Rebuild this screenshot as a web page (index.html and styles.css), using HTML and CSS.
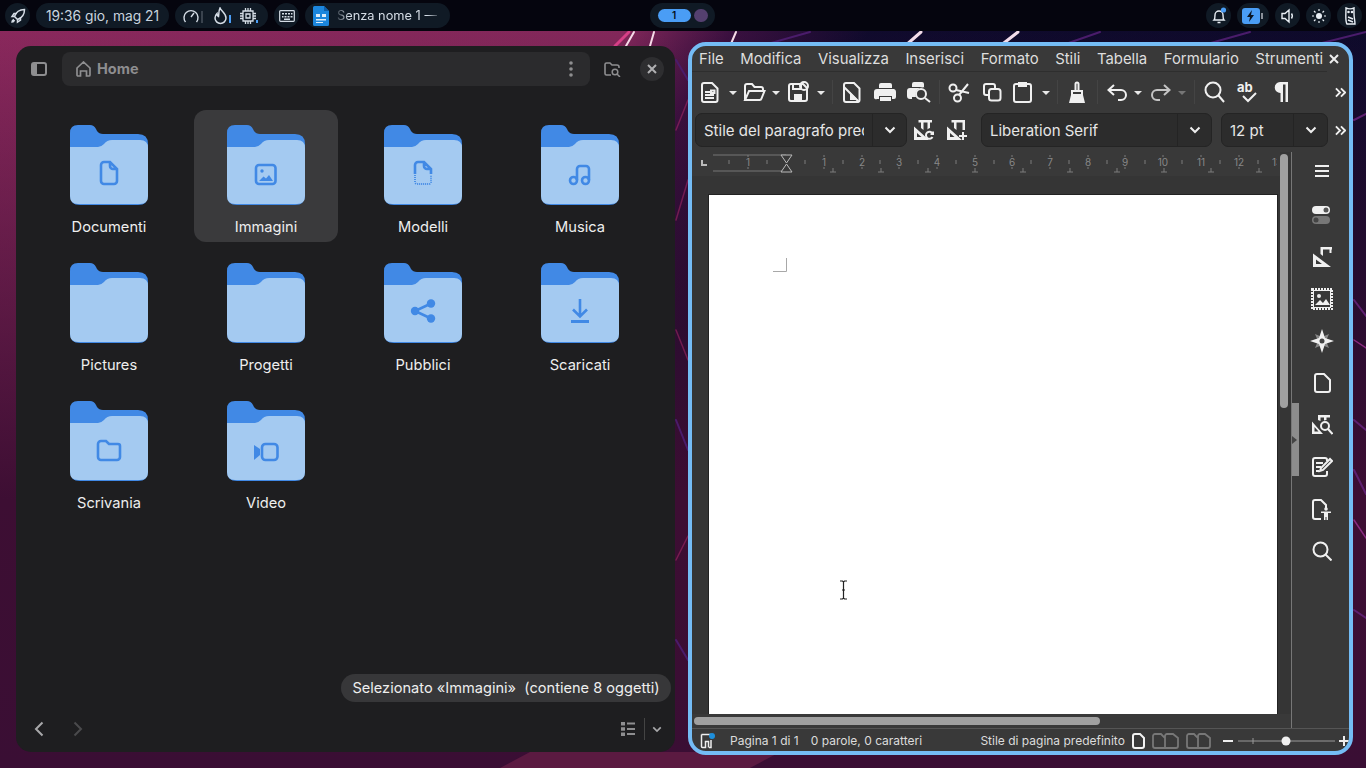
FILE: index.html
```html
<!DOCTYPE html>
<html lang="it">
<head>
  <meta charset="UTF-8">
  <meta name="viewport" content="width=device-width, initial-scale=1.0">
  <title>Desktop</title>
  <link rel="stylesheet" href="styles.css">
</head>
<body>
  <svg width="0" height="0" class="defs">
    <symbol id="folder" viewBox="0 0 78 80">
      <path fill="#4189e5" d="M8 0H20q4 0 6 4l1 2q2 3 6 3H68q10 0 10 10V70q0 10-10 10H10Q0 80 0 70V8Q0 0 8 0Z"/>
      <path fill="#a4caf1" d="M0 22H28q3 0 6-3 3-4 8-4H70q8 0 8 8V71q0 8-8 8H8q-8 0-8-8Z"/>
    </symbol>
    <symbol id="tri" viewBox="0 0 8 24"><path fill="#e8e8e8" d="M0 11h8l-4 4z"/></symbol>
    <symbol id="chev" viewBox="0 0 12 8"><path fill="none" stroke="#eee" stroke-width="2" d="M1.500 1.500 6 6l4.500-4.500"/></symbol>
    <symbol id="more" viewBox="0 0 12 12"><path fill="none" stroke="#eee" stroke-width="2" d="M1 1.500 5.500 6 1 10.500M6.500 1.500 11 6l-4.500 4.500"/></symbol>
  </svg>

  <!-- wallpaper -->
  <svg class="wallpaper" width="1366" height="768" viewBox="0 0 1366 768">
    <defs>
      <linearGradient id="wallBase" x1="0" y1="0" x2="1" y2="0.35">
        <stop offset="0" stop-color="#8f2a5f"/>
        <stop offset="0.42" stop-color="#86295c"/>
        <stop offset="0.49" stop-color="#3a1040"/>
        <stop offset="0.58" stop-color="#0d0a2c"/>
        <stop offset="1" stop-color="#0a0a2a"/>
      </linearGradient>
      <linearGradient id="wallLow" x1="0" y1="0" x2="0" y2="1">
        <stop offset="0" stop-color="#3d0e33" stop-opacity="0"/>
        <stop offset="0.65" stop-color="#3d0e33"/>
        <stop offset="1" stop-color="#3a0e34"/>
      </linearGradient>
    </defs>
    <rect width="1366" height="768" fill="url(#wallBase)"/>
    <rect width="1366" height="768" fill="url(#wallLow)"/>
    <path fill="#5b1a41" d="M530 752h250l-30 16H500z"/>
    <g fill="none" stroke-linecap="round">
      <path stroke="#f6dbe8" stroke-width="2" d="M634 32l-8 14M654 32l-4 14M730 46l6-14"/>
      <path stroke="#d63f86" stroke-width="3" d="M615 46l14-14"/>
      <path stroke="#f3dcea" stroke-width="3" d="M905 46l16-14M1000 46l18-14"/>
      <path stroke="#4a1c6b" stroke-width="2" d="M760 46l50-14M1060 46l40-14M1200 46l50-14M1310 46l56-14"/>
      <path stroke="#5e1f70" stroke-width="2" d="M1354 120l12-6M1354 300l12 16M1354 420l12 10M1354 470l12 24M1354 610l12 8"/>
      <path stroke="#8a2a80" stroke-width="1.500" d="M1354 340l12 8M1354 520l12 18"/>
      <path stroke="#b42a6c" stroke-width="1.500" opacity="0.5" d="M676 130l12-30M676 220l12-40M676 330l12 30M676 560l12-24"/>
      <path stroke="#4a1c6b" stroke-width="2" d="M676 420l12 30M676 640l12 20M676 60l12 20"/>
    </g>
  </svg>

  <div class="topbar">
    <div class="pill round">
      <svg width="16" height="16" viewBox="0 0 16 16"><path fill="none" stroke="#d5dde6" stroke-width="1.500" d="M6 10 4.500 8.500C6 4 9.500 1.500 14.500 1.500 14.500 6.500 12 10 7.500 11.500ZM4.500 8.500H2l2-3h3M7.500 11.500V14l3-2V9M4 11.500c-1.500.5-2 2-2 2.500.5 0 2-.5 2.500-2"/></svg>
    </div>
    <div class="pill clock">19:36 gio, mag 21</div>
    <div class="pill stats">
      <svg width="16" height="16" viewBox="0 0 16 16"><path fill="none" stroke="#d5dde6" stroke-width="1.400" d="M2.500 14a7 7 0 1 1 11 0M8 9l3-4"/></svg>
      <span class="meter"></span>
      <svg class="fire" width="16" height="18" viewBox="0 0 16 18"><path fill="none" stroke="#d5dde6" stroke-width="1.500" d="M7 1c1 3 6 5 6 10a5.500 5.500 0 0 1-11 0c0-2 1-3.500 2-4.500 0 1.500.5 2.500 1.500 3C6 7 5.500 4 7 1Z"/></svg>
      <span class="meter blue"></span>
      <svg class="chip" width="16" height="16" viewBox="0 0 16 16"><path fill="none" stroke="#d5dde6" stroke-width="1.300" d="M3 3h10v10H3zM6 6h4v4H6zM5.500 0v3M8 0v3M10.500 0v3M5.500 13v3M8 13v3M10.500 13v3M0 5.500h3M0 8h3M0 10.500h3M13 5.500h3M13 8h3M13 10.500h3"/></svg>
      <span class="meter blue low"></span>
    </div>
    <div class="pill round">
      <svg width="16" height="12" viewBox="0 0 16 12"><path fill="none" stroke="#d5dde6" stroke-width="1.200" d="M1.500.7h13a.8.8 0 0 1 .8.8v9a.8.8 0 0 1-.8.8h-13a.8.8 0 0 1-.8-.8v-9a.8.8 0 0 1 .8-.8z"/><path fill="#d5dde6" d="M3 3h2v1.500H3zM6 3h2v1.500H6zM9 3h2v1.500H9zM12 3h1.500v1.500H12zM3 6h1.500v1.500H3zM5.500 6h2v1.500h-2zM8.500 6h2v1.500h-2zM11.500 6h2v1.500h-2zM5 8.500h6V10H5z"/></svg>
    </div>
    <div class="pill task">
      <svg width="16" height="20" viewBox="0 0 16 20">
        <path fill="#1c86dd" d="M1.500 0H11l5 5v13.500a1.500 1.500 0 0 1-1.500 1.500h-13A1.500 1.500 0 0 1 0 18.500v-17A1.500 1.500 0 0 1 1.500 0Z"/>
        <path fill="#0f5ea8" d="M11 0l5 5h-5z"/>
        <path fill="#dcecf9" d="M3 8h4v3H3zM9 8h4v3H9zM3 13h10v1.500H3zM3 16h7v1H3z"/>
      </svg>
      <span class="task-title">Senza nome 1 —</span>
    </div>
    <div class="pill workspaces">
      <span class="ws-active">1</span>
      <span class="ws-dot"></span>
    </div>
    <div class="spacer"></div>
    <div class="pill tray">
      <svg width="16" height="18" viewBox="0 0 16 18"><path fill="none" stroke="#e8eef4" stroke-width="1.400" d="M3 13c1-1 1-3 1-5a4 4 0 0 1 8 0c0 2 0 4 1 5zM6.500 15.500h3"/><circle cx="12.500" cy="3" r="2.600" fill="#4a9df5"/></svg>
    </div>
    <div class="pill tray wide">
      <svg width="22" height="16" viewBox="0 0 22 16"><rect width="18" height="16" rx="3" fill="#4a9df5"/><path fill="#0b1522" d="M10 2 5 9h3l-1 5 5-7H9z"/><path fill="#8b9099" d="M19 5h2v6h-2z"/></svg>
    </div>
    <div class="pill tray">
      <svg width="14" height="16" viewBox="0 0 14 16"><path fill="none" stroke="#e8eef4" stroke-width="1.400" d="M1 5.500h3L8 2v12l-4-3.500H1zM10.500 5.500c1 1.500 1 3.500 0 5"/></svg>
    </div>
    <div class="pill tray">
      <svg width="14" height="14" viewBox="0 0 14 14"><circle cx="7" cy="7" r="3" fill="#e8eef4"/><path stroke="#e8eef4" stroke-width="1.200" d="M7 0v2M7 12v2M0 7h2M12 7h2M2 2l1.500 1.500M10.500 10.500 12 12M2 12l1.500-1.500M10.500 3.500 12 2"/></svg>
    </div>
    <div class="pill tray">
      <svg width="12" height="18" viewBox="0 0 12 18"><path fill="none" stroke="#e8eef4" stroke-width="1.400" d="M2 1c2 1 6 1 8 0v6c0 3 1 7 1 10H3C1 14 2 8 2 1Z"/><circle cx="4.500" cy="5" r="1.300" fill="#e8eef4"/><circle cx="8" cy="5" r="1.300" fill="#e8eef4"/><path stroke="#e8eef4" stroke-width="1.400" d="M4 10l5 2M4 13l5 2"/></svg>
    </div>
  </div>

  <!-- file manager -->
  <div class="window files">
    <div class="files-head">
      <button class="flat-btn">
        <svg width="16" height="14" viewBox="0 0 16 14"><path fill="none" stroke="#8e8e90" stroke-width="2" d="M3 1h10a2 2 0 0 1 2 2v8a2 2 0 0 1-2 2H3a2 2 0 0 1-2-2V3a2 2 0 0 1 2-2z"/><path fill="#8e8e90" d="M1 2h5v10H1z"/></svg>
      </button>
      <div class="pathbar">
        <svg width="15" height="16" viewBox="0 0 15 16"><path fill="none" stroke="#8e8e90" stroke-width="1.700" d="M1 7l6.500-6L14 7v7a1 1 0 0 1-1 1h-2.500v-5h-6v5H2a1 1 0 0 1-1-1z"/></svg>
        <span class="path-name">Home</span>
        <svg class="kebab" width="4" height="16" viewBox="0 0 4 16"><circle cx="2" cy="2" r="1.800" fill="#8e8e90"/><circle cx="2" cy="8" r="1.800" fill="#8e8e90"/><circle cx="2" cy="14" r="1.800" fill="#8e8e90"/></svg>
      </div>
      <button class="flat-btn search-btn">
        <svg width="17" height="15" viewBox="0 0 17 15"><path fill="none" stroke="#8e8e90" stroke-width="1.600" d="M7 13H2.500A1.500 1.500 0 0 1 1 11.500v-9A1.500 1.500 0 0 1 2.500 1H6l2 2h5a2 2 0 0 1 2 2v1"/><circle cx="11" cy="10" r="2.800" fill="none" stroke="#8e8e90" stroke-width="1.500"/><path stroke="#8e8e90" stroke-width="1.500" d="M13 12l3 3"/></svg>
      </button>
      <button class="close-btn">
        <svg width="10" height="10" viewBox="0 0 10 10"><path stroke="#b0b0b2" stroke-width="2" d="M1 1l8 8M9 1l-8 8"/></svg>
      </button>
    </div>

    <div class="grid">
      <div class="item">
        <svg width="78" height="80" viewBox="0 0 78 80"><use href="#folder"/><path class="gl" d="M34 37h6l7 7v12a3 3 0 0 1-3 3H34a3 3 0 0 1-3-3V40a3 3 0 0 1 3-3zM40 37v4a3 3 0 0 0 3 3h4"/></svg>
        <span>Documenti</span>
      </div>
      <div class="item selected">
        <svg width="78" height="80" viewBox="0 0 78 80"><use href="#folder"/><rect class="gl" x="29" y="40" width="19.500" height="19" rx="3"/><circle cx="35" cy="46" r="1.700" fill="#4189e5"/><path fill="#4189e5" d="M32 56l4.500-4.500 2.500 2 3-3.500 4 6z"/></svg>
        <span>Immagini</span>
      </div>
      <div class="item">
        <svg width="78" height="80" viewBox="0 0 78 80"><use href="#folder"/><path class="gl" d="M31 49V40a3 3 0 0 1 3-3h6l7 7v5M40 37v4a3 3 0 0 0 3 3h4"/><path class="gl dots" d="M31 50v7a2 2 0 0 0 2 2h12a2 2 0 0 0 2-2v-7"/></svg>
        <span>Modelli</span>
      </div>
      <div class="item">
        <svg width="78" height="80" viewBox="0 0 78 80"><use href="#folder"/><circle class="gl" cx="32.500" cy="55.500" r="3.500"/><circle class="gl" cx="44.500" cy="55.500" r="3.500"/><path class="gl" d="M36 55V44a3 3 0 0 1 3-3h6a3 3 0 0 1 3 3v11"/></svg>
        <span>Musica</span>
      </div>
      <div class="item">
        <svg width="78" height="80" viewBox="0 0 78 80"><use href="#folder"/></svg>
        <span>Pictures</span>
      </div>
      <div class="item">
        <svg width="78" height="80" viewBox="0 0 78 80"><use href="#folder"/></svg>
        <span>Progetti</span>
      </div>
      <div class="item">
        <svg width="78" height="80" viewBox="0 0 78 80"><use href="#folder"/><circle cx="31" cy="48" r="4.200" fill="#4189e5"/><circle cx="47" cy="40.500" r="4.200" fill="#4189e5"/><circle cx="47" cy="55.500" r="4.200" fill="#4189e5"/><path class="gl" d="M47 40.500 31 48l16 7.500"/></svg>
        <span>Pubblici</span>
      </div>
      <div class="item">
        <svg width="78" height="80" viewBox="0 0 78 80"><use href="#folder"/><path class="gl" d="M39 36v17M32 46.500l7 7 7-7"/><path fill="#4189e5" d="M30 57h18v3H30z"/></svg>
        <span>Scaricati</span>
      </div>
      <div class="item">
        <svg width="78" height="80" viewBox="0 0 78 80"><use href="#folder"/><path class="gl" d="M28 43a3 3 0 0 1 3-3h5l3 3h9a2 2 0 0 1 2 2v11a3 3 0 0 1-3 3H31a3 3 0 0 1-3-3z"/></svg>
        <span>Scrivania</span>
      </div>
      <div class="item">
        <svg width="78" height="80" viewBox="0 0 78 80"><use href="#folder"/><rect class="gl" x="35" y="43" width="15.500" height="16" rx="3.500"/><path fill="#4189e5" d="M27 44l6 4v6l-6 5z"/></svg>
        <span>Video</span>
      </div>
    </div>

    <div class="toast">Selezionato «Immagini»  (contiene 8 oggetti)</div>

    <div class="files-foot">
      <svg width="10" height="16" viewBox="0 0 10 16"><path fill="none" stroke="#a8a8aa" stroke-width="2" d="M8.500 1.500 2 8l6.500 6.500"/></svg>
      <svg class="forward" width="10" height="16" viewBox="0 0 10 16"><path fill="none" stroke="#4a4a4c" stroke-width="2" d="M1.500 1.500 8 8l-6.500 6.500"/></svg>
      <div class="spacer"></div>
      <svg width="14" height="14" viewBox="0 0 14 14"><path fill="#8e8e90" d="M0 0h4v3.500H0zM0 5.200h4v3.500H0zM0 10.500h4V14H0zM6 .5h8v2H6zM6 6h8v2H6zM6 11h8v2H6z"/></svg>
      <span class="foot-sep"></span>
      <svg width="10" height="7" viewBox="0 0 12 8"><path fill="none" stroke="#a8a8aa" stroke-width="2" d="M1.500 1.500 6 6l4.500-4.500"/></svg>
    </div>
  </div>

  <!-- writer -->
  <div class="window writer">
    <div class="menubar">
      <span>File</span><span>Modifica</span><span>Visualizza</span><span>Inserisci</span><span>Formato</span><span>Stili</span><span>Tabella</span><span>Formulario</span><span>Strumenti</span>
      <svg class="menu-close" width="10" height="10" viewBox="0 0 10 10"><path stroke="#eee" stroke-width="2" d="M1 1l8 8M9 1l-8 8"/></svg>
    </div>

    <div class="toolbar">
      <svg class="ic" width="28" height="24" viewBox="0 0 28 24"><path d="M3 3h8l5.500 5.500V20a2 2 0 0 1-2 2H3a2 2 0 0 1-2-2V5a2 2 0 0 1 2-2z"/><path stroke-width="1.500" d="M4 12h5M4 15h9M4 18h9M10 10.500h3.500v2.500H10z"/></svg>
      <svg width="14" height="24" viewBox="0 0 14 24"><use href="#tri" width="8" height="24"/></svg>
      <svg class="ic" width="29" height="24" viewBox="0 0 29 24"><path d="M2 20V6a2 2 0 0 1 2-2h5l2.500 3H18a2 2 0 0 1 2 2v2M2 20l4-9h15.500l-3 7.500a2 2 0 0 1-2 1.500z"/></svg>
      <svg width="16" height="24" viewBox="0 0 16 24"><use href="#tri" width="8" height="24"/></svg>
      <svg class="ic" width="29" height="24" viewBox="0 0 29 24"><path d="M3 4h12l4 4v11a2 2 0 0 1-2 2H3a2 2 0 0 1-2-2V6a2 2 0 0 1 2-2z"/><path d="M5 4v5h8V4"/><path class="solid" d="M6 14h8v7H6z"/><circle cx="16" cy="6" r="4" fill="#1d8fdc" stroke="none"/></svg>
      <svg width="15" height="24" viewBox="0 0 15 24"><use href="#tri" width="8" height="24"/></svg>
      <svg class="sep" width="11" height="24" viewBox="0 0 11 24"><path d="M.500 0v24"/></svg>
      <svg class="ic" width="31" height="24" viewBox="0 0 31 24"><path d="M3 3h8l5.500 5.500V20a2 2 0 0 1-2 2H3a2 2 0 0 1-2-2V5a2 2 0 0 1 2-2z"/><path d="M1 7l15 15"/><path class="solid" d="M7 12v8h8z"/></svg>
      <svg class="ic" width="33" height="24" viewBox="0 0 33 24"><path class="solid" d="M5 5a2 2 0 0 1 2-2h9a2 2 0 0 1 2 2v3H5zM3 9h17a3 3 0 0 1 2 3v5a2 2 0 0 1-2 2h-2v-3H5v3H3a2 2 0 0 1-3-2v-5a3 3 0 0 1 3-3zM6 17h11v4H6z"/></svg>
      <svg class="ic" width="32" height="24" viewBox="0 0 32 24"><path class="solid" d="M5 4a2 2 0 0 1 2-2h8a2 2 0 0 1 2 2v3H5zM3 8h15a7 7 0 0 0-9 9H5v2H3a3 3 0 0 1-3-3v-5a3 3 0 0 1 3-3z"/><circle cx="14" cy="14" r="5"/><path d="M18 18l5 4"/></svg>
      <svg class="sep" width="9" height="24" viewBox="0 0 9 24"><path d="M.500 0v24"/></svg>
      <svg class="ic" width="35" height="24" viewBox="0 0 35 24"><circle cx="5" cy="8" r="3.500"/><circle cx="9.500" cy="18" r="3.500"/><path d="M8 10l13 3M11 15l9-11"/></svg>
      <svg class="ic" width="30" height="24" viewBox="0 0 30 24"><path d="M5 15H3a2 2 0 0 1-2-2V6a2 2 0 0 1 2-2h7a2 2 0 0 1 2 2v2"/><rect x="6" y="9" width="11.500" height="11.500" rx="2.500"/></svg>
      <svg class="ic" width="29" height="24" viewBox="0 0 29 24"><path d="M5 4H3a2 2 0 0 0-2 2v14a2 2 0 0 0 2 2h13a2 2 0 0 0 2-2V6a2 2 0 0 0-2-2h-2"/><path class="solid" d="M5 2h9v5H5z"/></svg>
      <svg width="15" height="24" viewBox="0 0 15 24"><use href="#tri" width="8" height="24"/></svg>
      <svg class="sep" width="12" height="24" viewBox="0 0 12 24"><path d="M.500 0v24"/></svg>
      <svg class="ic" width="28" height="24" viewBox="0 0 28 24"><path d="M6.500 10V4a1.500 1.500 0 0 1 3 0v6M3 11h10v4H3z"/><path class="solid" d="M2 15h12l2 8H0z"/></svg>
      <svg class="sep" width="10" height="24" viewBox="0 0 10 24"><path d="M.500 0v24"/></svg>
      <svg class="ic" width="27" height="24" viewBox="0 0 27 24"><path d="M7 5 1.500 10 7 15M2 10h12a5 5 0 0 1 0 10h-3"/></svg>
      <svg width="17" height="24" viewBox="0 0 17 24"><use href="#tri" width="8" height="24"/></svg>
      <svg class="ic dim" width="27" height="24" viewBox="0 0 27 24"><path d="M13 5l5.500 5L13 15M18 10H6a5 5 0 0 0 0 10h3"/></svg>
      <svg class="faded" width="16" height="24" viewBox="0 0 16 24"><use href="#tri" width="8" height="24"/></svg>
      <svg class="sep" width="10" height="24" viewBox="0 0 10 24"><path d="M.500 0v24"/></svg>
      <svg class="ic" width="33" height="24" viewBox="0 0 33 24"><circle cx="9" cy="10" r="7.500"/><path d="M14.500 15.500 20 22"/></svg>
      <svg class="ic" width="37" height="24" viewBox="0 0 37 24"><text class="ab" x="0" y="12">ab</text><path d="M6 16l5 5 8-8"/></svg>
      <svg class="ic" width="61" height="24" viewBox="0 0 61 24"><path class="solid" d="M6 2h8v20h-2.500V4.500H9V22H6.500V13A5.500 5.500 0 0 1 6 2z"/></svg>
      <svg width="11" height="11" viewBox="0 0 12 12"><use href="#more"/></svg>
    </div>

    <div class="toolbar second">
      <div class="combo style-combo"><span class="combo-text">Stile del paragrafo predefinito</span><span class="combo-btn"><svg width="12" height="8"><use href="#chev"/></svg></span></div>
      <svg class="ic" width="20" height="20" viewBox="0 0 20 20"><path class="solid" fill-rule="evenodd" d="M0 6.500 15 20H0ZM3 13v4h4.500Z"/><path class="solid" d="M4.500 0H18v2.500h-2V8a6 6 0 0 0-2.500 1.500V2.500h-4v7.500L7 8V2.500H4.500z"/><path stroke-width="1.700" d="M18.500 13.500a3.500 3.500 0 1 0 0 3.500M19 11.500v2.500h-2.500"/></svg>
      <svg class="ic" width="20" height="20" viewBox="0 0 20 20"><path class="solid" fill-rule="evenodd" d="M0 6.500 15 20H0ZM3 13v4h4.500Z"/><path class="solid" d="M4.500 0H18v10h-2.500V2.500h-6v7.500L7 8V2.500H4.500z"/><path d="M16 12v8M12 16h8"/></svg>
      <div class="combo font-combo"><span class="combo-text">Liberation Serif</span><span class="combo-btn"><svg width="12" height="8"><use href="#chev"/></svg></span></div>
      <div class="combo size-combo"><span class="combo-text">12 pt</span><span class="combo-btn"><svg width="12" height="8"><use href="#chev"/></svg></span></div>
      <svg class="more-second" width="11" height="11" viewBox="0 0 12 12"><use href="#more"/></svg>
    </div>

    <div class="work">
      <div class="editor">
        <svg class="ruler" width="585" height="24" viewBox="692 152 585 24">
          <path class="ruler-box" d="M713 155h73M713 171h73"/>
          <path class="ruler-mark" d="M781 155h11l-5.500 8zM781 172h11l-5.500-8z"/>
          <path class="ruler-corner" d="M701 160v6h6v-2h-4v-4z"/>
          <path class="ruler-tick" d="M729 160v4M767 160v4M805 160v4M843 160v4M880 160v4M918 160v4M956 160v4M994 160v4M1031 160v4M1069 160v4M1107 160v4M1145 160v4M1182 160v4M1220 160v4M1258 160v4M748 155v2M748 167v2M824 155v2M824 167v2M862 155v2M862 167v2M899 155v2M899 167v2M937 155v2M937 167v2M975 155v2M1012 155v2M1012 167v2M1050 155v2M1050 167v2M1088 155v2M1088 167v2M1125 155v2M1125 167v2M1163 155v2M1201 155v2M1239 155v2M1239 167v2"/>
          <path class="ruler-tab" d="M833 168v4M830 172h6M881 168v4M878 172h6M928 168v4M925 172h6M975 168v4M972 172h6M1023 168v4M1020 172h6M1070 168v4M1067 172h6M1117 168v4M1114 172h6M1164 168v4M1161 172h6M1211 168v4M1208 172h6M1259 168v4M1256 172h6"/>
          <g class="ruler-num">
            <text x="748" y="166">1</text><text x="824" y="166">1</text><text x="862" y="166">2</text><text x="899" y="166">3</text><text x="937" y="166">4</text><text x="975" y="166">5</text><text x="1012" y="166">6</text><text x="1050" y="166">7</text><text x="1088" y="166">8</text><text x="1125" y="166">9</text><text x="1163" y="166">10</text><text x="1201" y="166">11</text><text x="1239" y="166">12</text><text x="1277" y="166">13</text>
          </g>
        </svg>
        <div class="canvas">
          <div class="page">
            <svg class="margin-mark" width="14" height="14" viewBox="0 0 14 14"><path fill="none" stroke="#a8a8a8" d="M13.500 0v13.500H0"/></svg>
            <svg class="ibeam" width="9" height="20" viewBox="0 0 9 20"><path fill="none" stroke="#222" stroke-width="1.200" d="M1 1h2.500l1 1 1-1H8M4.500 2v16M1 19h2.500l1-1 1 1H8M3 10h3"/></svg>
          </div>
        </div>
        <div class="hscroll"><span class="hthumb"></span></div>
        <span class="vthumb"></span>
      </div>
      <div class="sidebar">
        <span class="grip"><svg width="5" height="8" viewBox="0 0 5 8"><path fill="#444" d="M0 0l5 4-5 4z"/></svg></span>
        <svg class="ic hamburger" width="16" height="14" viewBox="0 0 16 14"><path d="M1 2h14M1 7h14M1 12h14"/></svg>
        <svg width="20" height="18" viewBox="0 0 20 18"><rect y="0" width="18" height="8" rx="4" fill="#f0f0f0"/><circle cx="14" cy="4" r="2.500" fill="#555"/><rect y="10" width="18" height="8" rx="4" fill="#777"/><circle cx="4" cy="14" r="2.500" fill="#444"/></svg>
        <svg class="ic" width="19" height="20" viewBox="0 0 19 20"><path class="solid" fill-rule="evenodd" d="M0 6.500 18 20H0ZM3 12.500V17h6Z"/><path class="solid" d="M7.500 0H19v2.500h-.5V6h-2V2.500H10V9L7.500 7z"/></svg>
        <svg class="ic" width="22" height="22" viewBox="0 0 22 22"><rect class="perf" x="1" y="1" width="20" height="20"/><rect class="thin" x="2.500" y="2.500" width="17" height="17"/><circle class="solid" cx="8" cy="8" r="2"/><path class="solid" d="M4 17l5-5 3 3 3-4 4 6z"/></svg>
        <svg width="24" height="24" viewBox="0 0 24 24"><path fill="#888" d="M5 5l7 3 7-3-3 7 3 7-7-3-7 3 3-7z"/><path fill="#f0f0f0" d="M12 0l3 9 9 3-9 3-3 9-3-9-9-3 9-3z"/><circle cx="12" cy="12" r="2.500" fill="#444"/></svg>
        <svg class="ic" width="17" height="20" viewBox="0 0 17 20"><path d="M3 1h7l6 6v10a2 2 0 0 1-2 2H3a2 2 0 0 1-2-2V3a2 2 0 0 1 2-2z"/></svg>
        <svg class="ic" width="21" height="20" viewBox="0 0 21 20"><path class="solid" fill-rule="evenodd" d="M0 6.500 11 19H0ZM2.500 12v4.500h4Z"/><path class="solid" d="M6 0h12v2.500h-3.500V5a6 6 0 0 0-2.500.5V2.500H8.500V6L6 5z"/><circle cx="13" cy="11" r="4" stroke-width="1.700"/><path d="M16 14l4.500 5"/></svg>
        <svg class="ic" width="21" height="20" viewBox="0 0 21 20"><path d="M15 14v3a2 2 0 0 1-2 2H3a2 2 0 0 1-2-2V3a2 2 0 0 1 2-2h10a2 2 0 0 1 2 2v1"/><path stroke-width="1.500" d="M4 6h7M4 10h5M4 14h3"/><path d="M8 14l1-3 9-9 2 2-9 9z"/></svg>
        <svg class="ic" width="20" height="21" viewBox="0 0 20 21"><path d="M9 20H3a2 2 0 0 1-2-2V3a2 2 0 0 1 2-2h6l5 5v3"/><circle class="solid" cx="14" cy="10" r="1.800"/><path class="solid" d="M9 12.500h10V14h-3v7h-1.500v-3h-1v3H12v-7H9z"/></svg>
        <svg class="ic" width="20" height="20" viewBox="0 0 20 20"><circle cx="8.500" cy="8.500" r="7"/><path d="M13.500 13.500 19.500 19.500"/></svg>
      </div>
    </div>

    <div class="statusbar">
      <svg class="status-save" width="16" height="16" viewBox="0 0 16 16"><path fill="none" stroke="#eee" stroke-width="1.500" d="M1.500 1.500h9v1M1.500 1.500v12a1 1 0 0 0 1 1h3v-6h3v6M11 7v7.500H9"/><circle cx="12" cy="3" r="3" fill="#1d8fdc"/></svg>
      <span class="st-page">Pagina 1 di 1</span>
      <span class="st-words">0 parole, 0 caratteri</span>
      <span class="st-style">Stile di pagina predefinito</span>
      <svg class="st-views" width="80" height="16" viewBox="0 0 80 16">
        <path fill="none" stroke="#f2f2f2" stroke-width="2" d="M3 1h5l4 4v8a2 2 0 0 1-2 2H3a2 2 0 0 1-2-2V3a2 2 0 0 1 2-2z"/>
        <path fill="none" stroke="#777" stroke-width="1.800" d="M23 1h6l4 4v10H23a2 2 0 0 1-2-2V3a2 2 0 0 1 2-2zM33 5V3a2 2 0 0 1 2-2h6l5 4v8a2 2 0 0 1-2 2H33M57 1h5l4 4v10H57a2 2 0 0 1-2-2V3a2 2 0 0 1 2-2zM66 5V3a2 2 0 0 1 2-2h5l5 4v8a2 2 0 0 1-2 2H66"/>
      </svg>
      <svg class="st-zoom" width="126" height="16" viewBox="0 0 126 16">
        <path stroke="#eee" stroke-width="2" d="M0 8h10M116 8h10M121 3v10"/>
        <path stroke="#999" d="M15 8h97M30 5v6"/>
        <circle cx="63" cy="8" r="4.500" fill="#f0f0f0"/>
      </svg>
    </div>
  </div>
</body>
</html>
```

FILE: styles.css
```css
* {
  box-sizing: border-box;
}

html, body {
  height: 100%;
}

body {
  margin: 0;
  width: 1366px;
  height: 768px;
  overflow: hidden;
  position: relative;
  background-color: #3a0e34;
  font-family: Inter, "Noto Sans", sans-serif;
  color: #eee;
}

svg {
  flex: none;
  display: block;
}

.defs {
  position: absolute;
}

.wallpaper {
  position: absolute;
  left: 0;
  top: 0;
}

.spacer {
  flex: 1;
}

button {
  border: none;
  background: none;
  padding: 0;
}

/* Top bar */
.topbar {
  position: relative;
  height: 31px;
  background-color: #05050e;
  display: flex;
  align-items: flex-start;
  padding: 3px 4px 0 5px;
  gap: 6px;
}

.pill {
  height: 25px;
  border-radius: 13px;
  background-color: #101a25;
  display: flex;
  align-items: center;
  justify-content: center;
  font-size: 13.800px;
  color: #c9d4df;
}

.round {
  width: 25px;
}

.clock {
  width: 133px;
}

.stats {
  width: 93px;
  justify-content: flex-start;
  padding-left: 8px;
}

.meter {
  width: 2px;
  height: 12px;
  margin-left: 2px;
  margin-top: 2px;
  background-color: #3a434e;
}

.meter.blue {
  height: 8px;
  margin-left: 0;
  margin-top: 6px;
  background: #4a9df5;
}

.meter.low {
  height: 3px;
  margin-top: 11px;
}

.fire {
  margin-left: 10px;
}

.chip {
  margin-left: 9px;
}

.task {
  width: 145px;
  justify-content: flex-start;
  padding-left: 8px;
  gap: 8px;
}

.task-title {
  white-space: nowrap;
  font-size: 12.800px;
  color: #d5dde6;
  -webkit-mask-image: linear-gradient(90deg, rgba(0, 0, 0, 0.2), #000 12%, #000 90%, rgba(0, 0, 0, 0.3));
  mask-image: linear-gradient(90deg, rgba(0, 0, 0, 0.2), #000 12%, #000 90%, rgba(0, 0, 0, 0.3));
}

.workspaces {
  width: 65px;
  gap: 3px;
  margin-left: 194px;
}

.ws-active {
  width: 33px;
  height: 13px;
  border-radius: 7px;
  background-color: #4a9df5;
  color: #05101c;
  font-size: 10px;
  font-weight: 600;
  line-height: 13px;
  text-align: center;
}

.ws-dot {
  width: 14px;
  height: 13px;
  border-radius: 7px;
  background-color: #54406f;
}

.tray {
  width: 25px;
  border-radius: 13px;
}

.tray.wide {
  width: 32px;
}

/* Windows */
.window {
  position: absolute;
}

.files {
  left: 16px;
  top: 46px;
  width: 659px;
  height: 706px;
  border-radius: 15px;
  background-color: #1e1e20;
}

.files-head {
  height: 46px;
  display: flex;
  align-items: center;
  padding: 0 11px 0 14px;
}

.flat-btn {
  width: 18px;
  display: flex;
  justify-content: center;
}

.pathbar {
  width: 528px;
  height: 34px;
  margin-left: 14px;
  border-radius: 8px;
  background-color: #2b2b2d;
  display: flex;
  align-items: center;
  padding: 0 17px 0 14px;
  gap: 6px;
}

.path-name {
  font-size: 14.500px;
  font-weight: 700;
  color: #8e8e90;
  flex: 1;
  padding-bottom: 2px;
}

.search-btn {
  margin-left: 13px;
}

.close-btn {
  width: 24px;
  height: 24px;
  margin-left: 19px;
  border-radius: 12px;
  background-color: #2e2e30;
  display: flex;
  align-items: center;
  justify-content: center;
}

.grid {
  display: grid;
  grid-template-columns: repeat(4, 144px);
  grid-auto-rows: 132px;
  column-gap: 13px;
  row-gap: 6px;
  padding: 18px 0 0 21px;
}

.item {
  display: flex;
  flex-direction: column;
  align-items: center;
  padding-top: 15px;
  border-radius: 12px;
  font-size: 14.670px;
  color: #eeeeee;
}

.item span {
  margin-top: 13px;
}

.selected {
  background-color: #3a3a3c;
}

.gl {
  fill: none;
  stroke: #4189e5;
  stroke-width: 2.600;
}

.dots {
  stroke-dasharray: 1 1;
  stroke-width: 1.800;
}

.toast {
  position: absolute;
  right: 4px;
  top: 628px;
  width: 330px;
  height: 28px;
  border-radius: 14px;
  background-color: #373739;
  font-size: 14.600px;
  line-height: 28px;
  text-align: center;
  white-space: pre;
  color: #eeeeee;
}

.files-foot {
  position: absolute;
  left: 18px;
  right: 13px;
  bottom: 15px;
  height: 16px;
  display: flex;
  align-items: center;
}

.forward {
  margin-left: 29px;
}

.foot-sep {
  width: 1px;
  height: 22px;
  margin: 0 7px 0 9px;
  background-color: #444;
}

/* Writer */
.writer {
  left: 688px;
  top: 42px;
  width: 665px;
  height: 713px;
  border: 4px solid #74bcf5;
  border-radius: 18px;
  background-color: #393939;
  overflow: hidden;
  display: flex;
  flex-direction: column;
}

.menubar {
  height: 26px;
  margin-right: 22px;
  flex: none;
  display: flex;
  align-items: center;
  gap: 16.500px;
  padding-left: 7px;
  border-bottom: 1px solid #2e2e2e;
  font-size: 14.900px;
  white-space: nowrap;
  color: #dedede;
}

.menu-close {
  margin-left: -10.500px;
}

.toolbar {
  height: 38px;
  flex: none;
  display: flex;
  align-items: center;
  padding: 2px 0 0 9px;
}

.toolbar.second {
  height: 42px;
  padding: 0 0 2px 3px;
}

.ic path, .ic circle, .ic rect {
  fill: none;
  stroke: #f0f0f0;
  stroke-width: 2;
}

.ic .solid {
  fill: #f0f0f0;
  stroke: none;
}

.ic .perf {
  stroke-dasharray: 2 1;
}

.ic .thin {
  stroke-width: 1;
}

.ic.dim path {
  stroke: #c4c4c4;
}

.faded {
  opacity: 0.35;
}

.sep path {
  stroke: #444;
}

.ab {
  fill: #f0f0f0;
  font-size: 13px;
  font-weight: 700;
}

.combo {
  height: 34px;
  display: flex;
  align-items: center;
  border: 1px solid #242424;
  border-radius: 7px;
  background-color: #2c2c2c;
  font-size: 15px;
  color: #e6e6e6;
}

.combo-text {
  flex: 1;
  min-width: 0;
  overflow: hidden;
  white-space: nowrap;
  margin: 0 8px;
}

.combo-btn {
  width: 34px;
  height: 100%;
  border-left: 1px solid #242424;
  display: flex;
  align-items: center;
  justify-content: center;
}

.style-combo {
  width: 212px;
  margin-right: 7px;
}

.toolbar.second .ic + .ic {
  margin-left: 13px;
}

.font-combo {
  width: 231px;
  margin-left: 14px;
}

.size-combo {
  width: 107px;
  margin-left: 9px;
}

.more-second {
  margin-left: 7px;
}

.work {
  flex: 1;
  min-height: 0;
  display: flex;
}

.editor {
  width: 599px;
  display: flex;
  flex-direction: column;
  position: relative;
  background-color: #353535;
}

.ruler {
  background-color: #393939;
  box-shadow: 3px 0 0 #393939;
}

.ruler-box {
  stroke: #777;
}

.ruler-mark {
  fill: #393939;
  stroke: #bbb;
}

.ruler-corner {
  fill: #bbb;
}

.ruler-tick, .ruler-tab {
  stroke: #7d7d7d;
}

.ruler-num text {
  fill: #888;
  font-size: 10px;
  text-anchor: middle;
}

.canvas {
  flex: 1;
  min-height: 0;
  padding: 19px 14px 0 17px;
  overflow: hidden;
}

.page {
  height: 100%;
  position: relative;
  background-color: #fff;
  box-shadow: 0 0 0 1px #222;
}

.margin-mark {
  position: absolute;
  left: 64px;
  top: 63px;
}

.ibeam {
  position: absolute;
  left: 130px;
  top: 385px;
}

.hscroll {
  height: 14px;
  flex: none;
  padding: 3px 0 0 2px;
  background-color: #393939;
}

.hthumb {
  display: block;
  width: 406px;
  height: 8px;
  border-radius: 4px;
  background-color: #a0a0a0;
}

.vthumb {
  position: absolute;
  left: 588px;
  top: 2px;
  width: 8px;
  height: 254px;
  border-radius: 4px;
  background-color: #a0a0a0;
}

.sidebar {
  flex: 1;
  position: relative;
  border-left: 1px solid #777;
  display: grid;
  grid-auto-rows: 42px;
  justify-items: center;
  align-items: center;
  padding-left: 3px;
}

.hamburger {
  margin-bottom: 4px;
}

.grip {
  position: absolute;
  left: 0;
  top: 251px;
  width: 7px;
  height: 73px;
  background-color: #8c8c8c;
  display: flex;
  align-items: center;
}

.statusbar {
  height: 23px;
  flex: none;
  border-top: 1px solid #555;
  padding-top: 1px;
  display: flex;
  align-items: center;
  font-size: 12px;
  color: #dcdcdc;
  white-space: nowrap;
  position: relative;
}

.status-save {
  margin-left: 8px;
}

.st-page {
  margin-left: 14px;
  width: 81px;
}

.st-words {
  width: 170px;
}

.st-style {
  width: 152px;
}

.st-zoom {
  margin-left: 11px;
}
```
